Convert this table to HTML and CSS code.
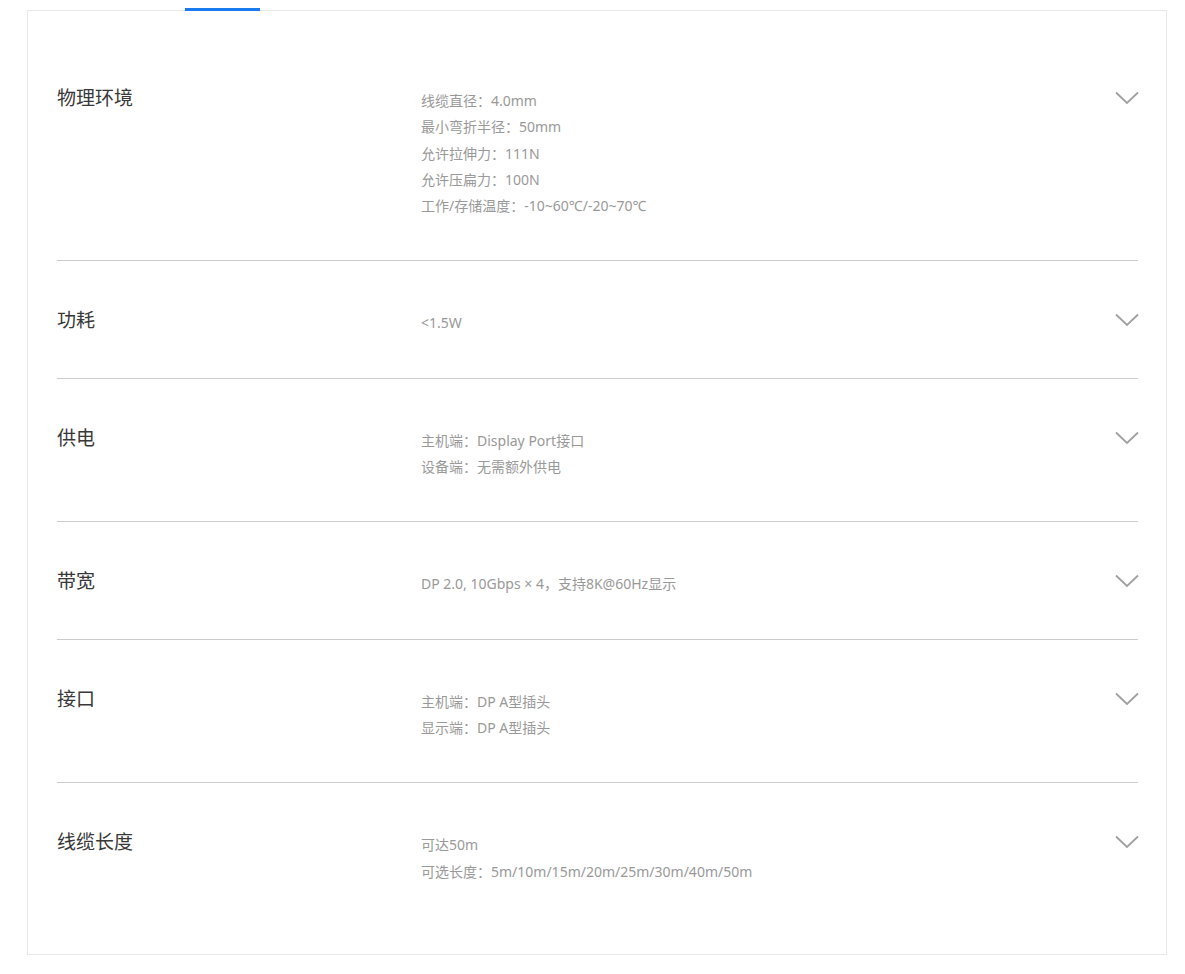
FILE: index.html
```html
<!DOCTYPE html>
<html lang="zh-CN">
<head>
  <meta charset="UTF-8" />
  <meta name="viewport" content="width=device-width, initial-scale=1.0"/>
  <title>规格参数</title>
  <link rel="stylesheet" href="styles.css">
</head>
<body>

<div class="spec-panel">
  <span class="tab-mark"></span>

  <div class="spec-row">
    <div class="spec-name">物理环境</div>
    <div class="spec-values">
      <p>线缆直径：4.0mm</p>
      <p>最小弯折半径：50mm</p>
      <p>允许拉伸力：111N</p>
      <p>允许压扁力：100N</p>
      <p>工作/存储温度：-10~60℃/-20~70℃</p>
    </div>
    <svg class="chevron" viewBox="0 0 24 14" width="24" height="14"><path d="M1 1.5 L12 12 L23 1.5" /></svg>
  </div>

  <div class="spec-row">
    <div class="spec-name">功耗</div>
    <div class="spec-values">
      <p>&lt;1.5W</p>
    </div>
    <svg class="chevron" viewBox="0 0 24 14" width="24" height="14"><path d="M1 1.5 L12 12 L23 1.5" /></svg>
  </div>

  <div class="spec-row">
    <div class="spec-name">供电</div>
    <div class="spec-values">
      <p>主机端：Display Port接口</p>
      <p>设备端：无需额外供电</p>
    </div>
    <svg class="chevron" viewBox="0 0 24 14" width="24" height="14"><path d="M1 1.5 L12 12 L23 1.5" /></svg>
  </div>

  <div class="spec-row">
    <div class="spec-name">带宽</div>
    <div class="spec-values">
      <p>DP 2.0, 10Gbps × 4，支持8K@60Hz显示</p>
    </div>
    <svg class="chevron" viewBox="0 0 24 14" width="24" height="14"><path d="M1 1.5 L12 12 L23 1.5" /></svg>
  </div>

  <div class="spec-row">
    <div class="spec-name">接口</div>
    <div class="spec-values">
      <p>主机端：DP A型插头</p>
      <p>显示端：DP A型插头</p>
    </div>
    <svg class="chevron" viewBox="0 0 24 14" width="24" height="14"><path d="M1 1.5 L12 12 L23 1.5" /></svg>
  </div>

  <div class="spec-row">
    <div class="spec-name">线缆长度</div>
    <div class="spec-values">
      <p>可达50m</p>
      <p>可选长度：5m/10m/15m/20m/25m/30m/40m/50m</p>
    </div>
    <svg class="chevron" viewBox="0 0 24 14" width="24" height="14"><path d="M1 1.5 L12 12 L23 1.5" /></svg>
  </div>
</div>

</body>
</html>
```

FILE: styles.css
```css
* {
  box-sizing: border-box;
  margin: 0;
  padding: 0;
}

body {
  background-color: #fff;
  font-family: "Noto Sans", "Noto Sans CJK SC", sans-serif;
  padding: 10px 0 20px 27px;
}

.spec-panel {
  position: relative;
  width: 1140px;
  border: 1px solid #e8e8e8;
  padding: 28px 28px 28px 29px;
}

/* active tab underline sitting on the top border */
.tab-mark {
  position: absolute;
  top: -3px;
  left: 157px;
  width: 75px;
  height: 3px;
  background-color: #1a7bf0;
}

.spec-row {
  display: flex;
  align-items: flex-start;
  padding: 47px 0 41px;
  border-bottom: 1px solid #cccccc;
}

.spec-row:last-child {
  border-bottom: none;
}

.spec-name {
  width: 364px;
  flex-shrink: 0;
  font-size: 19px;
  line-height: 24px;
  color: #383838;
}

.spec-values {
  flex: 1;
  margin-top: 2px;
  font-size: 14px;
  line-height: 26.3px;
  color: #999;
}

.chevron {
  flex-shrink: 0;
  margin-top: 5px;
  margin-right: -1px;
  fill: none;
  stroke: #a0a0a0;
  stroke-width: 1.8;
}
```
